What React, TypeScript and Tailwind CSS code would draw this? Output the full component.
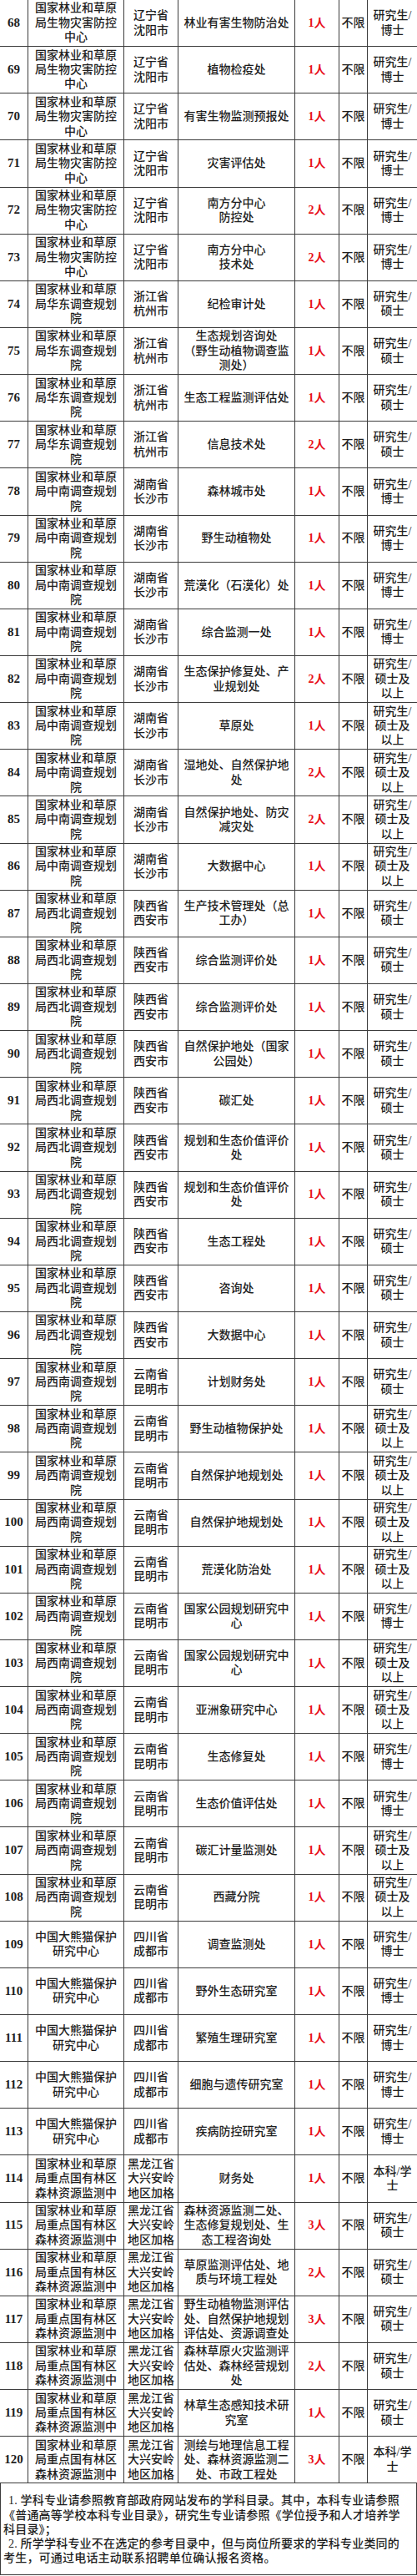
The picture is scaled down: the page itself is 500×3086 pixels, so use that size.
import React from "react";

type Row = {
  n: number;
  unit: string[];
  loc: string[];
  pos: string[];
  num: string;
  edu: string[];
};

const U_BIO = ["国家林业和草原", "局生物灾害防控", "中心"];
const U_HD = ["国家林业和草原", "局华东调查规划", "院"];
const U_ZN = ["国家林业和草原", "局中南调查规划", "院"];
const U_XB = ["国家林业和草原", "局西北调查规划", "院"];
const U_XN = ["国家林业和草原", "局西南调查规划", "院"];
const U_PD = ["中国大熊猫保护", "研究中心"];
const U_HLJ = ["国家林业和草原", "局重点国有林区", "森林资源监测中"];

const L_SY = ["辽宁省", "沈阳市"];
const L_HZ = ["浙江省", "杭州市"];
const L_CS = ["湖南省", "长沙市"];
const L_XA = ["陕西省", "西安市"];
const L_KM = ["云南省", "昆明市"];
const L_CD = ["四川省", "成都市"];
const L_HLJ = ["黑龙江省", "大兴安岭", "地区加格"];

const BS = ["研究生/", "博士"];
const SS = ["研究生/", "硕士"];
const SSY = ["研究生/", "硕士及", "以上"];
const BK = ["本科/学", "士"];

const rows: Row[] = [
  { n: 68, unit: U_BIO, loc: L_SY, pos: ["林业有害生物防治处"], num: "1人", edu: BS },
  { n: 69, unit: U_BIO, loc: L_SY, pos: ["植物检疫处"], num: "1人", edu: BS },
  { n: 70, unit: U_BIO, loc: L_SY, pos: ["有害生物监测预报处"], num: "1人", edu: BS },
  { n: 71, unit: U_BIO, loc: L_SY, pos: ["灾害评估处"], num: "1人", edu: BS },
  { n: 72, unit: U_BIO, loc: L_SY, pos: ["南方分中心", "防控处"], num: "2人", edu: BS },
  { n: 73, unit: U_BIO, loc: L_SY, pos: ["南方分中心", "技术处"], num: "2人", edu: BS },
  { n: 74, unit: U_HD, loc: L_HZ, pos: ["纪检审计处"], num: "1人", edu: SS },
  { n: 75, unit: U_HD, loc: L_HZ, pos: ["生态规划咨询处", "（野生动植物调查监", "测处）"], num: "1人", edu: SS },
  { n: 76, unit: U_HD, loc: L_HZ, pos: ["生态工程监测评估处"], num: "1人", edu: SS },
  { n: 77, unit: U_HD, loc: L_HZ, pos: ["信息技术处"], num: "2人", edu: SS },
  { n: 78, unit: U_ZN, loc: L_CS, pos: ["森林城市处"], num: "1人", edu: BS },
  { n: 79, unit: U_ZN, loc: L_CS, pos: ["野生动植物处"], num: "1人", edu: BS },
  { n: 80, unit: U_ZN, loc: L_CS, pos: ["荒漠化（石漠化）处"], num: "1人", edu: BS },
  { n: 81, unit: U_ZN, loc: L_CS, pos: ["综合监测一处"], num: "1人", edu: BS },
  { n: 82, unit: U_ZN, loc: L_CS, pos: ["生态保护修复处、产", "业规划处"], num: "2人", edu: SSY },
  { n: 83, unit: U_ZN, loc: L_CS, pos: ["草原处"], num: "1人", edu: SSY },
  { n: 84, unit: U_ZN, loc: L_CS, pos: ["湿地处、自然保护地", "处"], num: "2人", edu: SSY },
  { n: 85, unit: U_ZN, loc: L_CS, pos: ["自然保护地处、防灾", "减灾处"], num: "2人", edu: SSY },
  { n: 86, unit: U_ZN, loc: L_CS, pos: ["大数据中心"], num: "1人", edu: SSY },
  { n: 87, unit: U_XB, loc: L_XA, pos: ["生产技术管理处（总", "工办）"], num: "1人", edu: SS },
  { n: 88, unit: U_XB, loc: L_XA, pos: ["综合监测评价处"], num: "1人", edu: SS },
  { n: 89, unit: U_XB, loc: L_XA, pos: ["综合监测评价处"], num: "1人", edu: SS },
  { n: 90, unit: U_XB, loc: L_XA, pos: ["自然保护地处（国家", "公园处）"], num: "1人", edu: SS },
  { n: 91, unit: U_XB, loc: L_XA, pos: ["碳汇处"], num: "1人", edu: SS },
  { n: 92, unit: U_XB, loc: L_XA, pos: ["规划和生态价值评价", "处"], num: "1人", edu: SS },
  { n: 93, unit: U_XB, loc: L_XA, pos: ["规划和生态价值评价", "处"], num: "1人", edu: SS },
  { n: 94, unit: U_XB, loc: L_XA, pos: ["生态工程处"], num: "1人", edu: SS },
  { n: 95, unit: U_XB, loc: L_XA, pos: ["咨询处"], num: "1人", edu: SS },
  { n: 96, unit: U_XB, loc: L_XA, pos: ["大数据中心"], num: "1人", edu: SS },
  { n: 97, unit: U_XN, loc: L_KM, pos: ["计划财务处"], num: "1人", edu: SS },
  { n: 98, unit: U_XN, loc: L_KM, pos: ["野生动植物保护处"], num: "1人", edu: SSY },
  { n: 99, unit: U_XN, loc: L_KM, pos: ["自然保护地规划处"], num: "1人", edu: SSY },
  { n: 100, unit: U_XN, loc: L_KM, pos: ["自然保护地规划处"], num: "1人", edu: SSY },
  { n: 101, unit: U_XN, loc: L_KM, pos: ["荒漠化防治处"], num: "1人", edu: SSY },
  { n: 102, unit: U_XN, loc: L_KM, pos: ["国家公园规划研究中", "心"], num: "1人", edu: BS },
  { n: 103, unit: U_XN, loc: L_KM, pos: ["国家公园规划研究中", "心"], num: "1人", edu: SSY },
  { n: 104, unit: U_XN, loc: L_KM, pos: ["亚洲象研究中心"], num: "1人", edu: SSY },
  { n: 105, unit: U_XN, loc: L_KM, pos: ["生态修复处"], num: "1人", edu: BS },
  { n: 106, unit: U_XN, loc: L_KM, pos: ["生态价值评估处"], num: "1人", edu: BS },
  { n: 107, unit: U_XN, loc: L_KM, pos: ["碳汇计量监测处"], num: "1人", edu: SSY },
  { n: 108, unit: U_XN, loc: L_KM, pos: ["西藏分院"], num: "1人", edu: SSY },
  { n: 109, unit: U_PD, loc: L_CD, pos: ["调查监测处"], num: "1人", edu: BS },
  { n: 110, unit: U_PD, loc: L_CD, pos: ["野外生态研究室"], num: "1人", edu: BS },
  { n: 111, unit: U_PD, loc: L_CD, pos: ["繁殖生理研究室"], num: "1人", edu: BS },
  { n: 112, unit: U_PD, loc: L_CD, pos: ["细胞与遗传研究室"], num: "1人", edu: BS },
  { n: 113, unit: U_PD, loc: L_CD, pos: ["疾病防控研究室"], num: "1人", edu: BS },
  { n: 114, unit: U_HLJ, loc: L_HLJ, pos: ["财务处"], num: "1人", edu: BK },
  { n: 115, unit: U_HLJ, loc: L_HLJ, pos: ["森林资源监测二处、", "生态修复规划处、生", "态工程咨询处"], num: "3人", edu: SS },
  { n: 116, unit: U_HLJ, loc: L_HLJ, pos: ["草原监测评估处、地", "质与环境工程处"], num: "2人", edu: SS },
  { n: 117, unit: U_HLJ, loc: L_HLJ, pos: ["野生动植物监测评估", "处、自然保护地规划", "评估处、资源调查处"], num: "3人", edu: SS },
  { n: 118, unit: U_HLJ, loc: L_HLJ, pos: ["森林草原火灾监测评", "估处、森林经营规划", "处"], num: "2人", edu: SS },
  { n: 119, unit: U_HLJ, loc: L_HLJ, pos: ["林草生态感知技术研", "究室"], num: "1人", edu: SS },
  { n: 120, unit: U_HLJ, loc: L_HLJ, pos: ["测绘与地理信息工程", "处、森林资源监测二", "处、市政工程处"], num: "3人", edu: BK },
];

function Lines({ lines }: { lines: string[] }) {
  return (
    <div className="flex flex-col items-center">
      {lines.map((l, i) => (
        <span key={i} className="whitespace-nowrap">
          {l}
        </span>
      ))}
    </div>
  );
}

const cell =
  "flex items-center justify-center text-center border-r border-[#3c3c3c] overflow-hidden";

export default function App() {
  return (
    <div
      className="w-[500px] bg-white text-[#1e1e1e] text-[14px] leading-[17.4px] font-medium"
      style={{ fontFamily: '"Liberation Serif", "Noto Sans CJK SC", serif' }}
    >
      {rows.map((r) => (
        <div
          key={r.n}
          className="grid grid-cols-[34px_115px_65px_140px_53px_34px_59px] h-[56.15px] border-b border-[#3c3c3c]"
        >
          <div className={`${cell} font-bold text-[15px]`}>{r.n}</div>
          <div className={cell}>
            <Lines lines={r.unit} />
          </div>
          <div className={cell}>
            <Lines lines={r.loc} />
          </div>
          <div className={cell}>
            <Lines lines={r.pos} />
          </div>
          <div className={`${cell} text-[#e8101a] font-bold`}>{r.num}</div>
          <div className={cell}>不限</div>
          <div className="flex items-center justify-center text-center overflow-hidden">
            <Lines lines={r.edu} />
          </div>
        </div>
      ))}
      <div className="h-[110px] border-l border-r border-b border-[#3c3c3c] pl-[3px] pt-[12px] text-[14px] leading-[17.2px] tracking-[0.2px]">
        <div className="whitespace-nowrap pl-[6px]">1. 学科专业请参照教育部政府网站发布的学科目录。其中，本科专业请参照</div>
        <div className="whitespace-nowrap">《普通高等学校本科专业目录》，研究生专业请参照《学位授予和人才培养学</div>
        <div className="whitespace-nowrap">科目录》；</div>
        <div className="whitespace-nowrap pl-[6px]">2. 所学学科专业不在选定的参考目录中，但与岗位所要求的学科专业类同的</div>
        <div className="whitespace-nowrap">考生，可通过电话主动联系招聘单位确认报名资格。</div>
      </div>
    </div>
  );
}
